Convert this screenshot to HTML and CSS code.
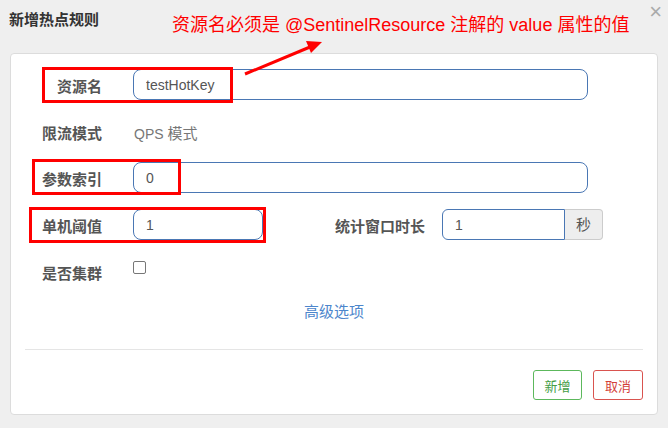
FILE: index.html
```html
<!DOCTYPE html>
<html lang="zh">
<head>
<meta charset="utf-8">
<title>新增热点规则</title>
<link rel="stylesheet" href="styles.css">
</head>
<body>
<div class="header">
  <h4 class="title">新增热点规则</h4>
  <span class="close">×</span>
</div>
<div class="card">
  <div class="form">
    <div class="row">
      <label class="lbl">资源名</label>
      <div class="ctrl"><input class="input" value="testHotKey"></div>
    </div>
    <div class="row row-static">
      <label class="lbl">限流模式</label>
      <div class="ctrl static">QPS <span class="cjk">模式</span></div>
    </div>
    <div class="row">
      <label class="lbl">参数索引</label>
      <div class="ctrl"><input class="input" value="0"></div>
    </div>
    <div class="row">
      <label class="lbl">单机阈值</label>
      <div class="ctrl split">
        <input class="input small" value="1">
        <label class="lbl2">统计窗口时长</label>
        <div class="group">
          <input class="input grp" value="1">
          <span class="addon">秒</span>
        </div>
      </div>
    </div>
    <div class="row row-check">
      <label class="lbl">是否集群</label>
      <div class="ctrl"><span class="checkbox"></span></div>
    </div>
    <div class="advanced">高级选项</div>
  </div>
  <div class="divider"></div>
  <div class="footer">
    <button class="btn btn-ok">新增</button>
    <button class="btn btn-cancel">取消</button>
  </div>
</div>

<div class="note">资源名必须是 @SentinelResource 注解的 value 属性的值</div>
<svg class="arrow" width="668" height="428" viewBox="0 0 668 428">
  <line x1="245" y1="74" x2="310" y2="47" stroke="#ff0000" stroke-width="3"/>
  <polygon points="322,42 306,41 311,53" fill="#ff0000"/>
</svg>
<div class="mark mark1"></div>
<div class="mark mark2"></div>
<div class="mark mark3"></div>
</body>
</html>
```
FILE: styles.css
```css
* { box-sizing: border-box; }
html, body { margin: 0; padding: 0; }
body {
  width: 668px;
  height: 428px;
  background: #efefef;
  font-family: "Liberation Sans", "Noto Sans CJK SC", sans-serif;
  font-size: 14px;
  color: #555;
  position: relative;
  overflow: hidden;
}
.header {
  height: 53px;
  padding: 11px 9px 0 9px;
  display: flex;
  justify-content: space-between;
}
.title {
  margin: 0;
  font-size: 15px;
  line-height: 18px;
  font-weight: bold;
  color: #333;
}
.close {
  font-size: 22px;
  line-height: 16px;
  color: #aaa;
  margin-top: -7px;
  margin-right: -3px;
}
.card {
  margin: 0 10px;
  width: 648px;
  height: 362px;
  background: #fff;
  border: 1px solid #dcdcdc;
  border-radius: 4px;
}
.form {
  padding: 15px 69px 0 15px;
}
.row {
  display: flex;
  height: 31px;
  margin-bottom: 16px;
}
.row-static { height: 30px; }
.lbl {
  width: 76px;
  flex: none;
  text-align: right;
  font-size: 15px;
  font-weight: bold;
  line-height: 20px;
  padding-top: 8px;
  color: #555;
}
.ctrl {
  margin-left: 31px;
  flex: 1;
  display: flex;
}
.static {
  color: #777;
  line-height: 20px;
  padding-top: 8px;
  padding-left: 1px;
  display: block;
}
.cjk { font-size: 15px; }
.input {
  width: 100%;
  height: 31px;
  border: 1px solid #4a77b4;
  border-radius: 8px;
  padding: 0 12px;
  font: 14px "Liberation Sans", "Noto Sans CJK SC", sans-serif;
  color: #555;
  background: #fff;
  outline: none;
}
.split { align-items: stretch; }
.small { width: 130px; flex: none; }
.lbl2 {
  width: 162px;
  flex: none;
  text-align: right;
  font-size: 15px;
  font-weight: bold;
  line-height: 20px;
  padding-top: 8px;
  color: #555;
}
.group {
  margin-left: 17px;
  width: 161px;
  flex: none;
  display: flex;
  margin-right: -15px;
}
.grp {
  width: 123px;
  flex: none;
  border-radius: 6px 0 0 6px;
}
.addon {
  flex: 1;
  background: #eee;
  border: 1px solid #ccc;
  border-left: none;
  border-radius: 0 4px 4px 0;
  text-align: center;
  line-height: 29px;
  font-size: 15px;
  color: #555;
}
.row-check { margin-bottom: 15px; }
.checkbox {
  display: block;
  width: 13px;
  height: 13px;
  margin-top: 5px;
  border: 1px solid #777;
  border-radius: 2px;
}
.advanced {
  text-align: center;
  color: #4d86cc;
  font-size: 15px;
  line-height: 20px;
  margin-left: -15px;
  margin-right: -69px;
}
.divider {
  margin: 27px 14px 0 14px;
  height: 1px;
  background: #e5e5e5;
}
.footer {
  display: flex;
  justify-content: flex-end;
  gap: 11px;
  padding: 20px 14px 0 0;
}
.btn {
  width: 50px;
  height: 30px;
  background: #fff;
  border-radius: 3px;
  font: 13px "Liberation Sans", "Noto Sans CJK SC", sans-serif;
  padding: 0;
}
.btn-ok { border: 1px solid #5cb85c; color: #449d44; width: 49px; }
.btn-cancel { border: 1px solid #d9534f; color: #d43f3a; }
.note {
  position: absolute;
  left: 172px;
  top: 14px;
  font-size: 18px;
  line-height: 22px;
  color: #ff0000;
  white-space: nowrap;
}
.arrow {
  position: absolute;
  left: 0;
  top: 0;
}
.mark {
  position: absolute;
  border: 3px solid #ff0000;
}
.mark1 { left: 42px; top: 67px; width: 191px; height: 36px; }
.mark2 { left: 32px; top: 159px; width: 149px; height: 36px; }
.mark3 { left: 29px; top: 207px; width: 237px; height: 36px; }
```
